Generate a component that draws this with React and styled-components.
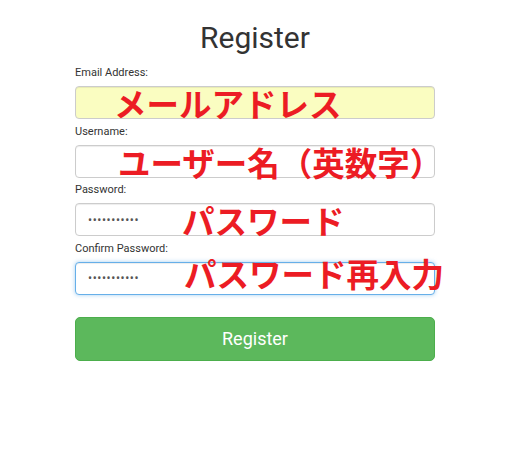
import React from "react";
import styled, { createGlobalStyle } from "styled-components";

const Global = createGlobalStyle`
  html, body { margin: 0; padding: 0; background: #fff; }
  body { font-family: Roboto, "Noto Sans", Arial, sans-serif; color: #333; }
`;

const Page = styled.div`
  width: 522px;
  height: 456px;
  padding: 21px 0 0 75px;
  box-sizing: border-box;
`;

const Form = styled.form`
  width: 360px;
  display: flex;
  flex-direction: column;
`;

const Title = styled.h1`
  margin: 0 0 11px;
  font-family: Roboto, Arial, sans-serif;
  font-weight: 400;
  font-size: 30px;
  line-height: 34px;
  text-align: center;
  color: #333;
`;

const Field = styled.div`
  position: relative;
  display: flex;
  flex-direction: column;
  margin-bottom: 5.5px;
`;

const Label = styled.label`
  font-size: 11px;
  line-height: 14px;
  margin-bottom: 6px;
  color: #333;
`;

const Input = styled.input`
  box-sizing: border-box;
  height: 33px;
  width: 100%;
  padding: 0 12px;
  font-family: Roboto, Arial, sans-serif;
  font-size: 12px;
  letter-spacing: 0.6px;
  color: #555;
  border: 1px solid ${(p) => (p.$focused ? "#66afe9" : "#ccc")};
  border-radius: 4px;
  background: ${(p) => (p.$autofill ? "#fafdc1" : "#fff")};
  box-shadow: ${(p) =>
    p.$focused
      ? "inset 0 1px 1px rgba(0,0,0,.075), 0 0 4px rgba(102,175,233,.6)"
      : "inset 0 1px 1px rgba(0,0,0,.075)"};
  outline: none;
`;

const Note = styled.span`
  position: absolute;
  left: ${(p) => p.$x}px;
  top: ${(p) => p.$y}px;
  font-family: "Noto Sans CJK JP", "Noto Sans", sans-serif;
  font-weight: 700;
  font-size: 32.5px;
  line-height: 1;
  color: #ec1c24;
  white-space: nowrap;
  pointer-events: none;
`;

const Button = styled.button`
  margin-top: 16.5px;
  height: 44px;
  border: 1px solid #4cae4c;
  border-radius: 5px;
  background: #5cb85c;
  color: #fff;
  font-family: Roboto, Arial, sans-serif;
  font-size: 18px;
  cursor: pointer;
`;

const fields = [
  { label: "Email Address:", type: "email", value: "", note: "メールアドレス", x: 39, y: 21, autofill: true },
  { label: "Username:", type: "text", value: "", note: "ユーザー名（英数字）", x: 43, y: 21 },
  { label: "Password:", type: "password", value: "12345678901", note: "パスワード", x: 107, y: 21 },
  { label: "Confirm Password:", type: "password", value: "12345678901", note: "パスワード再入力", x: 109, y: 15, focused: true },
];

export default function App() {
  return (
    <>
      <Global />
      <Page>
        <Form onSubmit={(e) => e.preventDefault()}>
          <Title>Register</Title>
          {fields.map((f) => (
            <Field key={f.label}>
              <Label>{f.label}</Label>
              <Input
                type={f.type}
                defaultValue={f.value}
                $autofill={f.autofill}
                $focused={f.focused}
                readOnly
              />
              <Note $x={f.x} $y={f.y}>{f.note}</Note>
            </Field>
          ))}
          <Button type="submit">Register</Button>
        </Form>
      </Page>
    </>
  );
}
